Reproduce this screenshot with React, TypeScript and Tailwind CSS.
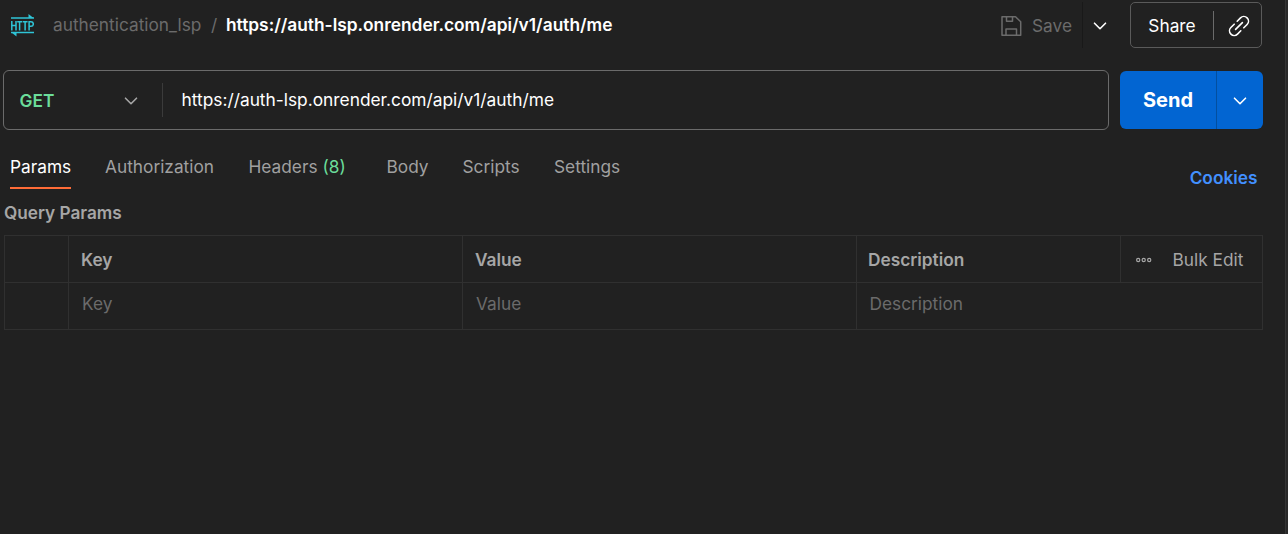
import type { ReactNode } from "react";

function Chevron({ className }: { className: string }) {
  return (
    <svg viewBox="0 0 14 8" fill="none" stroke="currentColor" strokeWidth="1.6" strokeLinecap="round" strokeLinejoin="round" className={className}>
      <path d="M1.5 1.2 7 6.700l5.500-5.500" />
    </svg>
  );
}

function HttpIcon() {
  return (
    <svg viewBox="0 0 24 24" fill="none" stroke="#2fc4d6" strokeWidth="1.500" className="h-6 w-6 shrink-0">
      <path d="M1 5h23M1 19.500h23" />
      <path d="m18.500 1 5 4h-5ZM6.500 23.500l-5-4h5Z" fill="#2fc4d6" stroke="none" />
      <path d="M1.800 8v9.500M1.800 12.500h4.200M6 8v9.500M7.200 8.700h4.800M9.600 8.700v8.800M12.600 8.700h5M15.100 8.700v8.800M19.100 17.500V8.700h1.900a2.300 2.300 0 0 1 0 4.600h-1.900" />
    </svg>
  );
}

function SaveIcon() {
  return (
    <svg viewBox="0 0 22 22" fill="none" stroke="currentColor" strokeWidth="1.500" strokeLinejoin="round" className="h-[22px] w-[22px] shrink-0">
      <path d="M2 1.700h13.500l5.200 5v13.600H2ZM6.500 1.700v4.600h6V1.700M6 20.300v-6.300h10.500v6.300" />
    </svg>
  );
}

function LinkIcon() {
  return (
    <svg viewBox="0 0 22 22" fill="none" stroke="currentColor" strokeWidth="1.600" strokeLinecap="round" className="h-[22px] w-[22px]">
      <path d="m7.600 14.400 6.800-6.800M9.200 6.200l3.300-3.300a4.650 4.650 0 0 1 6.600 6.600l-3.300 3.300M12.800 15.800l-3.300 3.300a4.650 4.650 0 0 1-6.600-6.600l3.300-3.300" />
    </svg>
  );
}

function Tab({ children, className, active = false }: { children: ReactNode; className: string; active?: boolean }) {
  return (
    <div className={`flex h-8 shrink-0 justify-start border-b-2 text-[17.300px] leading-5 whitespace-nowrap ${active ? "border-[#ff6c37] text-white" : "border-transparent text-[#a0a0a0]"} ${className}`}>
      <span>{children}</span>
    </div>
  );
}

export default function App() {
  return (
    <div className="flex h-[534px] w-[1288px] justify-between overflow-hidden bg-[#212121] font-['Inter',sans-serif] text-[17.300px] text-white">
      <main className="flex w-[1263px] flex-col">
        <header className="flex h-[50px] items-center pl-[10px]">
          <HttpIcon />
          <span className="ml-[19px] w-[158px] shrink-0 whitespace-nowrap text-[#6b6b6b]">authentication_lsp</span>
          <span className="w-[15px] shrink-0 text-[#6b6b6b]">/</span>
          <h1 className="flex-1 text-[17.330px] font-semibold whitespace-nowrap">https://auth-lsp.onrender.com/api/v1/auth/me</h1>
          <button className="flex h-[46px] w-[83px] items-center gap-[10px] border-r border-[#191919] pt-px text-[#6b6b6b]">
            <SaveIcon />
            Save
          </button>
          <button className="flex h-[46px] w-[47px] justify-start pt-[20px] pl-[9.500px]">
            <Chevron className="h-2 w-[14px]" />
          </button>
          <div className="mr-px flex h-[46px] w-[132px] items-center rounded-[5px] border border-[#5a5a5a]">
            <button className="w-[82px] pt-0.5 text-center">Share</button>
            <button className="flex h-[29px] flex-1 items-center justify-center border-l border-[#6b6b6b] pt-px pl-0.5">
              <LinkIcon />
            </button>
          </div>
        </header>
        <section className="mt-5 flex h-[60px] gap-[11px] pl-[3px]">
          <div className="flex w-[1106px] items-center rounded-[6px] border border-[#6b6b6b]">
            <button className="flex h-[34px] w-[159px] items-center border-r border-[#3b3b3b] pl-[15.500px] text-[#6bdd9a]">
              <span className="w-[104px] pt-0.5 text-left font-semibold">GET</span>
              <Chevron className="mt-px h-2 w-[14px] text-[#a6a6a6]" />
            </button>
            <span className="ml-[18.500px] text-[17.330px]">https://auth-lsp.onrender.com/api/v1/auth/me</span>
          </div>
          <div className="mt-px flex h-[58px] w-[143px] overflow-hidden rounded-[6px] bg-[#0265d2]">
            <button className="w-[97px] border-r border-[#034f9f] text-xl font-bold">Send</button>
            <button className="flex flex-1 items-center justify-center pt-0.5">
              <Chevron className="h-2 w-[14px]" />
            </button>
          </div>
        </section>
        <nav className="mt-[27px] flex h-8 pl-[10px]">
          <Tab active className="mr-[34px] w-[61px]">Params</Tab>
          <Tab className="w-[143.500px]">Authorization</Tab>
          <Tab className="w-[138px]">Headers <span className="text-[#6bdd9a]">(8)</span></Tab>
          <Tab className="w-[76px]">Body</Tab>
          <Tab className="w-[91.500px]">Scripts</Tab>
          <Tab className="flex-1">Settings</Tab>
          <button className="mt-[11px] mr-[5.500px] h-5 leading-5 font-semibold text-[#4290ff]">Cookies</button>
        </nav>
        <h2 className="mt-[14px] h-[32px] pl-1 text-[17.200px] leading-5 font-semibold text-[#a6a6a6]">Query Params</h2>
        <div className="ml-1 grid h-[95px] w-[1259px] grid-cols-[65px_394px_394px_406px] grid-rows-[47px_47px] border-t border-[#303030] leading-[47px]">
          <div className="border-x border-b border-[#303030]" />
          <div className="border-r border-b border-[#303030] pl-3 font-semibold text-[#a6a6a6]">Key</div>
          <div className="border-r border-b border-[#303030] pl-3 font-semibold text-[#a6a6a6]">Value</div>
          <div className="flex border-r border-b border-[#303030] text-[#a6a6a6]">
            <span className="h-[46px] w-[264px] border-r border-[#303030] pl-[11px] font-semibold">Description</span>
            <svg viewBox="0 0 16 6" fill="none" stroke="currentColor" strokeWidth="1.200" className="mt-[21px] ml-[15px] h-1.5 w-4">
              <circle cx="2.200" cy="3" r="1.600" /><circle cx="7.700" cy="3" r="1.600" /><circle cx="13.200" cy="3" r="1.600" />
            </svg>
            <span className="ml-[20.500px]">Bulk Edit</span>
          </div>
          <div className="border-x border-b border-[#303030]" />
          <div className="border-r border-b border-[#303030] pl-[13px] leading-[41px] text-[#6b6b6b]">Key</div>
          <div className="border-r border-b border-[#303030] pl-[13px] leading-[41px] text-[#6b6b6b]">Value</div>
          <div className="border-r border-b border-[#303030] pl-[12.500px] leading-[41px] text-[#6b6b6b]">Description</div>
        </div>
      </main>
      <div className="w-[3px] border-l border-[#353535] bg-[#292929]" />
    </div>
  );
}
